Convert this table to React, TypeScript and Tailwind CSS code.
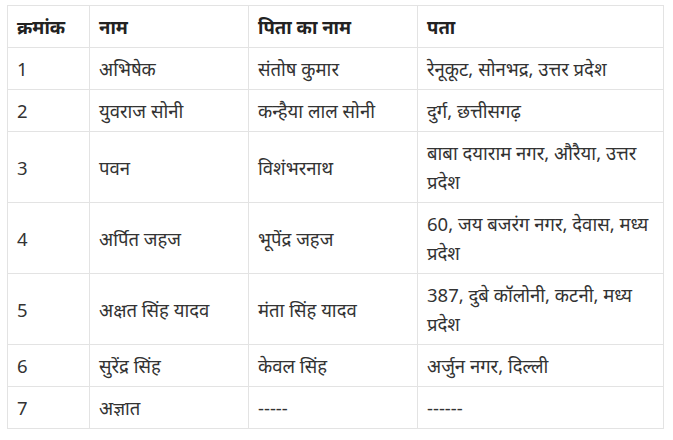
import React from "react";

const rows: [string, string, string, string][] = [
  ["1", "अभिषेक", "संतोष कुमार", "रेनूकूट, सोनभद्र, उत्तर प्रदेश"],
  ["2", "युवराज सोनी", "कन्हैया लाल सोनी", "दुर्ग, छत्तीसगढ़"],
  ["3", "पवन", "विशंभरनाथ", "बाबा दयाराम नगर, औरैया, उत्तर प्रदेश"],
  ["4", "अर्पित जहज", "भूपेंद्र जहज", "60, जय बजरंग नगर, देवास, मध्य प्रदेश"],
  ["5", "अक्षत सिंह यादव", "मंता सिंह यादव", "387, दुबे कॉलोनी, कटनी, मध्य प्रदेश"],
  ["6", "सुरेंद्र सिंह", "केवल सिंह", "अर्जुन नगर, दिल्ली"],
  ["7", "अज्ञात", "-----", "------"],
];

export default function App() {
  return (
    <div
      className="w-[673px] h-[440px] bg-white pl-[7px] pt-[5px]"
      style={{ fontFamily: '"Noto Sans", "Noto Sans Devanagari", "Open Sans", sans-serif' }}
    >
      <table className="table-fixed border-collapse w-[656px] text-[18.5px] leading-[29px] text-[#333]">
        <colgroup>
          <col className="w-[82px]" />
          <col className="w-[159px]" />
          <col className="w-[169px]" />
          <col className="w-[246px]" />
        </colgroup>
        <thead>
          <tr>
            {["क्रमांक", "नाम", "पिता का नाम", "पता"].map((h) => (
              <th
                key={h}
                className="border border-[#e3e3e3] px-[9px] py-[6px] text-left font-bold text-[#222]"
              >
                {h}
              </th>
            ))}
          </tr>
        </thead>
        <tbody>
          {rows.map((r) => (
            <tr key={r[0]}>
              {r.map((c, i) => (
                <td
                  key={i}
                  className="border border-[#e3e3e3] px-[9px] py-[6px] align-middle"
                >
                  {c}
                </td>
              ))}
            </tr>
          ))}
        </tbody>
      </table>
    </div>
  );
}
